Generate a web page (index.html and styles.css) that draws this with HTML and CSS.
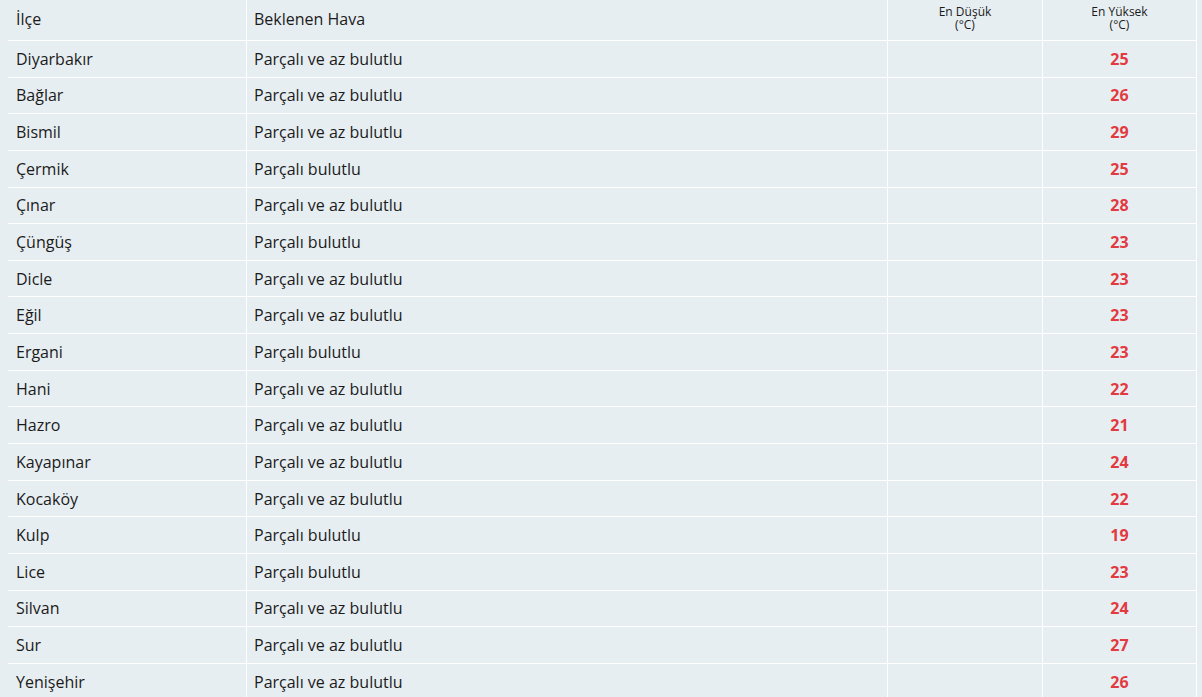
FILE: index.html
```html
<!DOCTYPE html>
<html lang="tr">
<head>
<meta charset="utf-8">
<title>İlçe hava durumu</title>
<link rel="stylesheet" href="styles.css">
</head>
<body>
<div class="wrap">
  <div class="grid">
    <div class="cell head">İlçe</div>
    <div class="cell head c2">Beklenen Hava</div>
    <div class="cell head small">En Düşük<br>(°C)</div>
    <div class="cell head small">En Yüksek<br>(°C)</div>

    <div class="cell">Diyarbakır</div><div class="cell c2">Parçalı ve az bulutlu</div><div class="cell"></div><div class="cell num">25</div>
    <div class="cell">Bağlar</div><div class="cell c2">Parçalı ve az bulutlu</div><div class="cell"></div><div class="cell num">26</div>
    <div class="cell">Bismil</div><div class="cell c2">Parçalı ve az bulutlu</div><div class="cell"></div><div class="cell num">29</div>
    <div class="cell">Çermik</div><div class="cell c2">Parçalı bulutlu</div><div class="cell"></div><div class="cell num">25</div>
    <div class="cell">Çınar</div><div class="cell c2">Parçalı ve az bulutlu</div><div class="cell"></div><div class="cell num">28</div>
    <div class="cell">Çüngüş</div><div class="cell c2">Parçalı bulutlu</div><div class="cell"></div><div class="cell num">23</div>
    <div class="cell">Dicle</div><div class="cell c2">Parçalı ve az bulutlu</div><div class="cell"></div><div class="cell num">23</div>
    <div class="cell">Eğil</div><div class="cell c2">Parçalı ve az bulutlu</div><div class="cell"></div><div class="cell num">23</div>
    <div class="cell">Ergani</div><div class="cell c2">Parçalı bulutlu</div><div class="cell"></div><div class="cell num">23</div>
    <div class="cell">Hani</div><div class="cell c2">Parçalı ve az bulutlu</div><div class="cell"></div><div class="cell num">22</div>
    <div class="cell">Hazro</div><div class="cell c2">Parçalı ve az bulutlu</div><div class="cell"></div><div class="cell num">21</div>
    <div class="cell">Kayapınar</div><div class="cell c2">Parçalı ve az bulutlu</div><div class="cell"></div><div class="cell num">24</div>
    <div class="cell">Kocaköy</div><div class="cell c2">Parçalı ve az bulutlu</div><div class="cell"></div><div class="cell num">22</div>
    <div class="cell">Kulp</div><div class="cell c2">Parçalı bulutlu</div><div class="cell"></div><div class="cell num">19</div>
    <div class="cell">Lice</div><div class="cell c2">Parçalı bulutlu</div><div class="cell"></div><div class="cell num">23</div>
    <div class="cell">Silvan</div><div class="cell c2">Parçalı ve az bulutlu</div><div class="cell"></div><div class="cell num">24</div>
    <div class="cell">Sur</div><div class="cell c2">Parçalı ve az bulutlu</div><div class="cell"></div><div class="cell num">27</div>
    <div class="cell">Yenişehir</div><div class="cell c2">Parçalı ve az bulutlu</div><div class="cell"></div><div class="cell num">26</div>
  </div>
</div>
</body>
</html>
```

FILE: styles.css
```css
html, body {
  margin: 0;
  padding: 0;
  background: #e7eef2;
}
body {
  font-family: "Open Sans", "Noto Sans", sans-serif;
  font-size: 16px;
  color: #1b1b1b;
}
.wrap {
  padding-left: 8px;
  background: #e7eef2;
  min-height: 697px;
}
.grid {
  display: grid;
  grid-template-columns: 239px 641px 155px 154px;
  grid-auto-rows: 36.65px;
  grid-template-rows: 41px;
  width: 1189px;
}
.cell {
  box-sizing: border-box;
  border-right: 1px solid #ffffff;
  border-bottom: 1px solid #ffffff;
  padding: 0 7px 0 8px;
  display: flex;
  align-items: center;
  line-height: 22px;
  white-space: nowrap;
}
.c2 {
  padding-left: 7px;
}
.head {
  padding-bottom: 2px;
}
.small {
  font-size: 12px;
  line-height: 13px;
  justify-content: center;
  text-align: center;
  padding: 0 0 4px;
}
.num {
  justify-content: center;
  font-weight: 700;
  color: #e23a40;
  padding: 0;
}
```
